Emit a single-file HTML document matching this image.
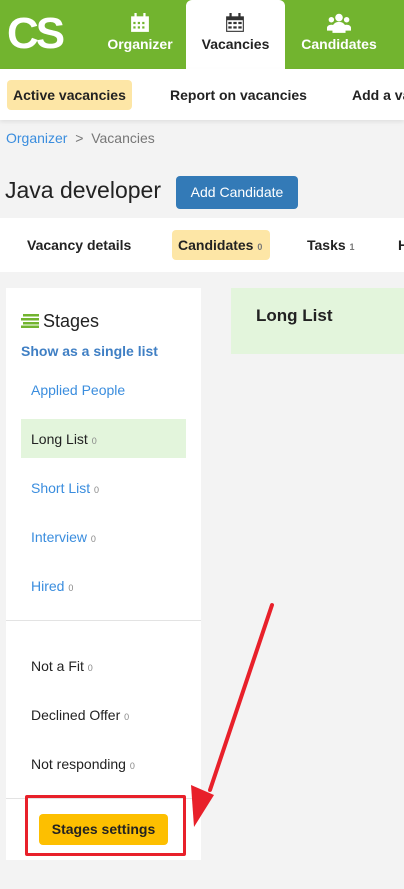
<!DOCTYPE html>
<html><head><style>
*{margin:0;padding:0;box-sizing:border-box}
html,body{overflow:hidden}
body{width:404px;height:889px;overflow:hidden;background:#f3f3f3;font-family:"Liberation Sans","DejaVu Sans",sans-serif;position:relative;color:#222}
.a{position:absolute;white-space:nowrap}
.hdr{left:0;top:0;width:404px;height:69px;background:#72b42f}
.tab{top:0;height:69px;text-align:center;font-weight:bold;font-size:14px}
.sub{left:0;top:69px;width:404px;height:51px;background:#fff;box-shadow:0 2px 4px rgba(0,0,0,.08)}
.sb{font-weight:bold;font-size:14px;color:#222}
.pill{background:#fde6a6;border-radius:4px}
.st{font-size:14px}
.st small{font-size:9px;color:#888}
.blue{color:#3a8dde}
</style></head><body>
<div class="a hdr"></div>
<div class="a" style="left:7px;top:9px;font-size:44px;font-weight:bold;color:#fff;letter-spacing:-3px;font-family:'Liberation Sans',sans-serif">CS</div>
<div class="a tab" style="left:95px;width:90px;color:#fff">
 <svg width="20" height="20" viewBox="0 0 18 18" style="margin-top:13px;display:block;margin-left:35px"><rect x="1" y="3" width="16" height="14" fill="#fff"/><g fill="#72b42f"><rect x="3" y="8" width="2" height="2"/><rect x="7" y="8" width="2" height="2"/><rect x="11" y="8" width="2" height="2"/><rect x="3" y="12" width="2" height="2"/><rect x="7" y="12" width="2" height="2"/><rect x="11" y="12" width="2" height="2"/></g><rect x="4" y="0" width="2" height="5" fill="#fff"/><rect x="12" y="0" width="2" height="5" fill="#fff"/></svg>
 <div style="margin-top:3px">Organizer</div></div>
<div class="a tab" style="left:186px;width:99px;background:#fff;border-radius:6px 6px 0 0;color:#222">
 <svg width="20" height="20" viewBox="0 0 18 18" style="margin-top:13px;display:block;margin-left:39px"><rect x="1.5" y="3.5" width="15" height="13" fill="none" stroke="#333"/><rect x="1.5" y="3.5" width="15" height="3" fill="#333"/><g fill="#333"><rect x="3" y="8" width="3" height="2"/><rect x="7.5" y="8" width="3" height="2"/><rect x="12" y="8" width="3" height="2"/><rect x="3" y="12" width="3" height="2"/><rect x="7.5" y="12" width="3" height="2"/><rect x="12" y="12" width="3" height="2"/></g><rect x="4" y="0" width="2" height="5" fill="#333"/><rect x="12" y="0" width="2" height="5" fill="#333"/></svg>
 <div style="margin-top:3px">Vacancies</div></div>
<div class="a tab" style="left:290px;width:98px;color:#fff">
 <svg width="24" height="20" viewBox="0 0 22 18" style="margin-top:13px;display:block;margin-left:37px" fill="#fff"><circle cx="11" cy="4" r="3.5"/><circle cx="4" cy="6" r="2.5"/><circle cx="18" cy="6" r="2.5"/><path d="M5 18v-5a6 5 0 0 1 12 0v5z"/><path d="M0 16v-3a4 3 0 0 1 6-2v5z"/><path d="M22 16v-3a4 3 0 0 0-6-2v5z"/></svg>
 <div style="margin-top:3px">Candidates</div></div>
<div class="a sub"></div>
<div class="a pill sb" style="left:7px;top:80px;width:125px;height:30px;line-height:30px;padding-left:6px">Active vacancies</div>
<div class="a sb" style="left:170px;top:87px">Report on vacancies</div>
<div class="a sb" style="left:352px;top:87px;width:52px;overflow:hidden">Add a vacancy</div>
<div class="a" style="left:6px;top:130px;font-size:14px;color:#777"><span class="blue">Organizer</span>&nbsp; &gt; &nbsp;Vacancies</div>
<div class="a" style="left:5px;top:177px;font-size:23px;color:#222">Java developer</div>
<div class="a" style="left:176px;top:176px;width:122px;height:33px;background:#337ab7;border-radius:4px;color:#fff;font-size:14px;line-height:33px;text-align:center">Add Candidate</div>
<div class="a" style="left:0;top:218px;width:404px;height:54px;background:#fff"></div>
<div class="a sb" style="left:27px;top:237px">Vacancy details</div>
<div class="a pill sb" style="left:172px;top:230px;width:98px;height:30px;line-height:30px;padding-left:6px">Candidates <small style="font-size:9px;color:#777">0</small></div>
<div class="a sb" style="left:307px;top:237px">Tasks <small style="font-size:9px;color:#777">1</small></div>
<div class="a sb" style="left:398px;top:237px">H</div>
<div class="a" style="left:6px;top:288px;width:195px;height:572px;background:#fff"></div>
<div class="a" style="left:231px;top:288px;width:173px;height:66px;background:#e3f5dc"></div>
<div class="a" style="left:256px;top:306px;font-size:17px;font-weight:bold">Long List</div>
<svg class="a" style="left:21px;top:314px" width="19" height="14"><rect x="2" y="0" width="16" height="2.5" fill="#72b42f"/><rect x="0" y="4" width="18" height="2.5" fill="#72b42f"/><rect x="2" y="8" width="16" height="2.5" fill="#72b42f"/><rect x="0" y="11.5" width="18" height="2.5" fill="#72b42f"/></svg>
<div class="a" style="left:43px;top:311px;font-size:18px;color:#222">Stages</div>
<div class="a" style="left:21px;top:343px;font-size:14px;font-weight:bold;color:#3f7fc4">Show as a single list</div>
<div class="a st blue" style="left:31px;top:382px">Applied People</div>
<div class="a" style="left:21px;top:419px;width:165px;height:39px;background:#e3f5dc"></div>
<div class="a st" style="left:31px;top:431px">Long List <small>0</small></div>
<div class="a st blue" style="left:31px;top:480px">Short List <small>0</small></div>
<div class="a st blue" style="left:31px;top:529px">Interview <small>0</small></div>
<div class="a st blue" style="left:31px;top:578px">Hired <small>0</small></div>
<div class="a" style="left:6px;top:620px;width:195px;height:1px;background:#e3e3e3"></div>
<div class="a st" style="left:31px;top:658px">Not a Fit <small>0</small></div>
<div class="a st" style="left:31px;top:707px">Declined Offer <small>0</small></div>
<div class="a st" style="left:31px;top:756px">Not responding <small>0</small></div>
<div class="a" style="left:6px;top:798px;width:195px;height:1px;background:#e3e3e3"></div>
<div class="a" style="left:39px;top:814px;width:129px;height:31px;background:#fdbf00;border-radius:4px;font-weight:bold;font-size:14px;line-height:31px;text-align:center;color:#222">Stages settings</div>
<div class="a" style="left:25px;top:795px;width:161px;height:61px;border:3px solid #e8202a;border-radius:2px"></div>
<svg class="a" style="left:180px;top:595px" width="110" height="240"><line x1="92" y1="10" x2="30" y2="195" stroke="#e8202a" stroke-width="4" stroke-linecap="round"/><polygon points="14,232 11,190 34,200" fill="#e8202a"/></svg>
</body></html>
